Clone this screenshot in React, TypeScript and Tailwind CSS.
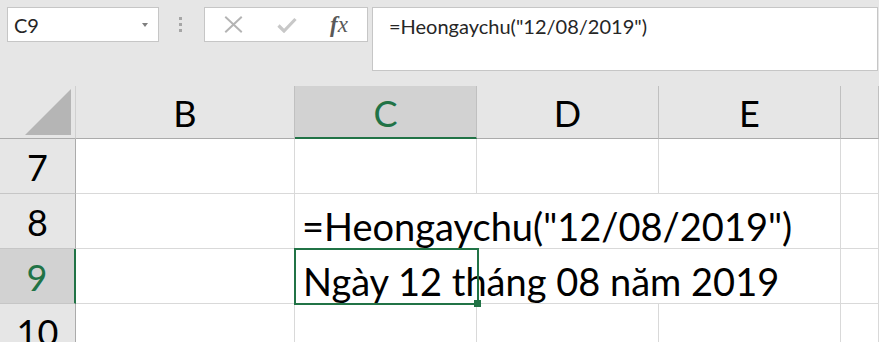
import React from "react";

const FONT = "font-['Lato','Open_Sans',sans-serif]";

const COLS = ["B", "C", "D", "E", ""];

function XIcon() {
  return (
    <svg width="19" height="17" viewBox="0 0 19 17" fill="none">
      <path d="M2 1.5 L17 15.5 M17 1.5 L2 15.5" stroke="#b4b4b4" strokeWidth="2" strokeLinecap="square" />
    </svg>
  );
}

function CheckIcon() {
  return (
    <svg width="20" height="16" viewBox="0 0 20 16" fill="none">
      <path d="M1.5 8.5 L7 14 L18.5 2" stroke="#c8c8c8" strokeWidth="3.2" />
    </svg>
  );
}

function FormulaBar() {
  return (
    <div className="flex h-[86px] items-start pl-[7px] pt-[7px]">
      <div className="flex h-[35px] w-[152px] items-center justify-between border border-[#c6c6c6] bg-white pl-[6px] pr-[10px]">
        <span className="text-[20px] leading-none text-[#262626]">C9</span>
        <span className="h-0 w-0 border-x-[3.5px] border-t-[4px] border-x-transparent border-t-[#7f7f7f]" />
      </div>
      <div className="ml-[20px] flex h-[35px] flex-col justify-center gap-[3px]">
        <span className="h-[3px] w-[3px] bg-[#a6a6a6]" />
        <span className="h-[3px] w-[3px] bg-[#a6a6a6]" />
        <span className="h-[3px] w-[3px] bg-[#a6a6a6]" />
      </div>
      <div className="ml-[22px] grid h-[35px] w-[164px] grid-cols-3 items-center border border-[#c6c6c6] bg-white">
        <span className="flex justify-center pl-[2px]"><XIcon /></span>
        <span className="flex justify-center pl-[2px]"><CheckIcon /></span>
        <span className="flex justify-center pr-[2px] font-['Liberation_Serif',serif] text-[23px] italic leading-none text-[#595959]">
          <span className="font-bold">f</span><span>x</span>
        </span>
      </div>
      <div className="ml-[4px] mr-[1px] h-[64px] flex-1 border border-[#c6c6c6] bg-white pl-[16px] pt-[8px]">
        <span className="text-[20px] leading-none text-[#262626]">=Heongaychu("12/08/2019")</span>
      </div>
    </div>
  );
}

function Sheet() {
  const rowHead = "flex items-center justify-center border-b border-r border-b-[#c6c6c6] border-r-[#ababab] bg-[#e6e6e6] pt-[2px] text-[36px] leading-none";
  const cell = "border-b border-r border-[#d9d9d9] bg-white";
  return (
    <div className="grid grid-cols-[76px_219px_182px_182px_182px_38px] grid-rows-[53px_55px_55px_55px_55px] text-[36px] leading-none text-black">
      <div className="flex items-end justify-end border-b border-r border-b-[#ababab] border-r-[#d0d0d0] bg-[#e6e6e6] pb-[3px] pr-[4px]">
        <svg width="46" height="46" viewBox="0 0 46 46">
          <polygon points="46,0 46,46 0,46" fill="#b5b5b5" />
        </svg>
      </div>
      {COLS.map((c) =>
        c === "C" ? (
          <div key={c} className="flex items-center justify-center border-b-2 border-r border-b-[#217346] border-r-[#c0c0c0] bg-[#d2d2d2] pt-[2px] text-[#217346]">
            {c}
          </div>
        ) : (
          <div key={c || "f"} className="flex items-center justify-center border-b border-r border-b-[#ababab] border-r-[#c0c0c0] bg-[#e6e6e6] pt-[2px]">
            {c}
          </div>
        )
      )}

      <div className={rowHead}>7</div>
      <div className={cell} />
      <div className={cell} />
      <div className={cell} />
      <div className={cell} />
      <div className={cell} />

      <div className={rowHead}>8</div>
      <div className={cell} />
      <div className={`${cell} col-span-3 flex items-end whitespace-nowrap pb-[3px] pl-[7px] text-[38px]`}>
        =Heongaychu("12/08/2019")
      </div>
      <div className={cell} />

      <div className="flex items-center justify-center border-b border-r-2 border-b-[#c6c6c6] border-r-[#217346] bg-[#d2d2d2] pt-[2px] text-[#217346]">9</div>
      <div className={cell} />
      <div className={`${cell} relative col-span-3 flex items-end whitespace-nowrap pb-[3px] pl-[8px] text-[38px]`}>
        Ngày 12 tháng 08 năm 2019
        <div className="absolute left-[-1px] top-[-1px] h-[57px] w-[185px] border-2 border-[#217346]">
          <span className="absolute bottom-[-4px] right-[-4px] h-[7px] w-[7px] bg-[#217346]" />
        </div>
      </div>
      <div className={cell} />

      <div className={rowHead}>10</div>
      <div className={cell} />
      <div className={cell} />
      <div className={cell} />
      <div className={cell} />
      <div className={cell} />
    </div>
  );
}

export default function App() {
  return (
    <div className={`h-[342px] w-[879px] overflow-hidden bg-[#e6e6e6] ${FONT}`}>
      <FormulaBar />
      <Sheet />
    </div>
  );
}
